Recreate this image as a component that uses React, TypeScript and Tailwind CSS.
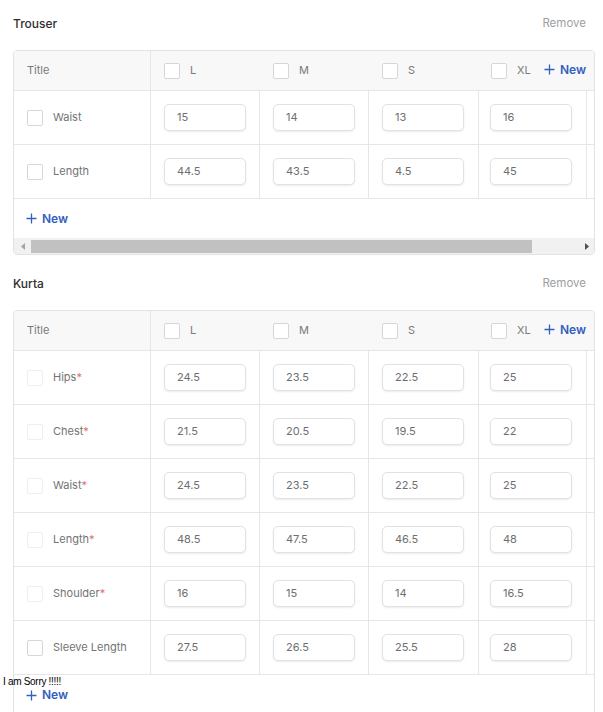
import React from "react";

type Row = { label: string; values: string[]; required?: boolean };

const sizes = [
    { key: "L", w: "w-[109px]" },
    { key: "M", w: "w-[109px]" },
    { key: "S", w: "w-[110px]" },
];

const trouser: Row[] = [
    { label: "Waist", values: ["15", "14", "13", "16"] },
    { label: "Length", values: ["44.5", "43.5", "4.5", "45"] },
];

const kurta: Row[] = [
    { label: "Hips", values: ["24.5", "23.5", "22.5", "25"], required: true },
    { label: "Chest", values: ["21.5", "20.5", "19.5", "22"], required: true },
    { label: "Waist", values: ["24.5", "23.5", "22.5", "25"], required: true },
    { label: "Length", values: ["48.5", "47.5", "46.5", "48"], required: true },
    { label: "Shoulder", values: ["16", "15", "14", "16.5"], required: true },
    { label: "Sleeve Length", values: ["27.5", "26.5", "25.5", "28"] },
];

function Box({ faint }: { faint?: boolean }) {
    return (
        <span
            className={
                "block h-[16px] w-[16px] shrink-0 rounded-[2px] border bg-white " +
                (faint ? "border-[#efefef]" : "border-[#d6d6d6]")
            }
        />
    );
}

function Plus() {
    return (
        <svg width="11" height="11" viewBox="0 0 11 11" className="shrink-0">
            <path d="M5.5 0.5v10M0.5 5.5h10" stroke="#3260bd" strokeWidth="1.3" fill="none" />
        </svg>
    );
}

function NewBtn() {
    return (
        <span className="inline-flex items-center gap-[5px] text-[12px] leading-[16px] font-semibold text-[#3260bd]">
            <Plus />
            New
        </span>
    );
}

function ValueInput({ v }: { v: string }) {
    return (
        <div className="flex h-[27px] w-[82px] items-center rounded-[5px] border border-[#e2e2e2] bg-white pl-[12px] text-[11px] text-[#6e6e6e] shadow-[0_1px_2px_rgba(0,0,0,0.08)]">
            {v}
        </div>
    );
}

function Table({ rows, faintBoxes, sorry }: { rows: Row[]; faintBoxes?: boolean; sorry?: boolean }) {
    return (
        <div className="ml-[13px] mr-[8px] mt-[3px] rounded-[4px] border border-[#e3e3e3]">
            <div className="overflow-hidden rounded-t-[3px]">
                <div className="w-[620px]">
                    <div className="flex h-[40px] border-b border-[#e6e6e6] bg-[#f8f8f8]">
                        <div className="flex w-[137px] shrink-0 items-center border-r border-[#e6e6e6] pl-[13px] text-[11px] text-[#7a7a7a]">
                            Title
                        </div>
                        {sizes.map((s) => (
                            <div key={s.key} className={s.w + " flex shrink-0 items-center gap-[10px] pl-[13px] text-[11px] text-[#7a7a7a]"}>
                                <Box />
                                {s.key}
                            </div>
                        ))}
                        <div className="flex w-[108px] shrink-0 items-center pl-[12px] text-[11px] text-[#7a7a7a]">
                            <Box />
                            <span className="ml-[10px]">XL</span>
                            <span className="ml-auto pr-[1px]">
                                <NewBtn />
                            </span>
                        </div>
                    </div>
                    {rows.map((r, i) => (
                        <div key={r.label + i} className="flex h-[54px] border-b border-[#e6e6e6]">
                            <div className="flex w-[137px] shrink-0 items-center gap-[10px] border-r border-[#e6e6e6] pl-[13px] text-[11px] text-[#737373]">
                                <Box faint={faintBoxes && r.required} />
                                <span>
                                    {r.label}
                                    {r.required && <span className="text-[#e07070]">*</span>}
                                </span>
                            </div>
                            {r.values.map((v, j) => (
                                <div
                                    key={j}
                                    className={
                                        (j === 3 ? "w-[108px] pl-[11px]" : j === 2 ? "w-[110px] pl-[13px]" : "w-[109px] pl-[13px]") +
                                        " flex shrink-0 items-center border-r border-[#e6e6e6]"
                                    }
                                >
                                    <ValueInput v={v} />
                                </div>
                            ))}
                            <div className="w-[40px] shrink-0" />
                        </div>
                    ))}
                </div>
            </div>
            <div className={"relative flex pl-[12px] " + (sorry ? "h-[44px] items-start pt-[12px]" : "h-[39px] items-center")}>
                {sorry && (
                    <span className="absolute left-[-11px] top-[1px] whitespace-nowrap font-['Liberation_Sans',Arial,sans-serif] text-[10px] leading-[12px] tracking-[-0.3px] text-black">
                        I am Sorry !!!!!
                    </span>
                )}
                <NewBtn />
            </div>
            {!sorry && (
                <div className="flex h-[16px] items-center rounded-b-[3px] bg-[#f1f1f1]">
                    <div className="flex w-[17px] justify-center">
                        <svg width="4" height="7" viewBox="0 0 4 7">
                            <path d="M4 0L0 3.5L4 7z" fill="#a3a3a3" />
                        </svg>
                    </div>
                    <div className="h-[13px] w-[501px] bg-[#c1c1c1]" />
                    <div className="flex flex-1 justify-end pr-[5px]">
                        <svg width="4" height="7" viewBox="0 0 4 7">
                            <path d="M0 0L4 3.5L0 7z" fill="#505050" />
                        </svg>
                    </div>
                </div>
            )}
        </div>
    );
}

function Section({ title, rows, faintBoxes, sorry }: { title: string; rows: Row[]; faintBoxes?: boolean; sorry?: boolean }) {
    return (
        <section>
            <div className="flex h-[47px] items-center justify-between pl-[13px] pr-[17px]">
                <h2 className="text-[12px] font-medium text-[#2e2e2e]">{title}</h2>
                <button className="text-[11.5px] text-[#a0a0a0]">Remove</button>
            </div>
            <Table rows={rows} faintBoxes={faintBoxes} sorry={sorry} />
        </section>
    );
}

export default function App() {
    return (
        <div className="flex h-[712px] w-full flex-col gap-[5px] overflow-hidden bg-white font-['Inter',sans-serif]">
            <Section title="Trouser" rows={trouser} />
            <Section title="Kurta" rows={kurta} faintBoxes sorry />
        </div>
    );
}
